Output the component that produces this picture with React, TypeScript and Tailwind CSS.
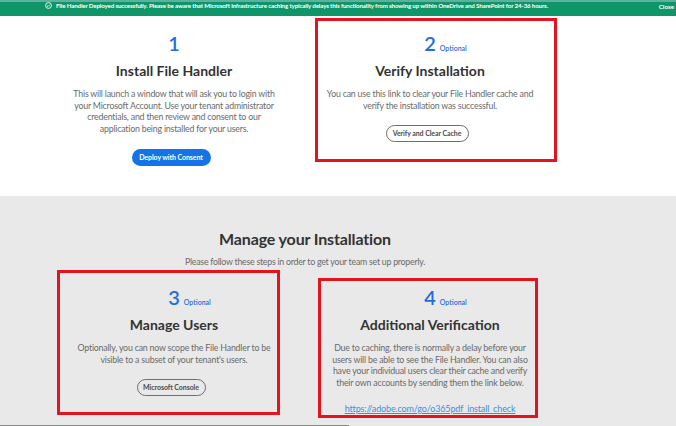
const font = "font-['Lato','Open_Sans',sans-serif]";

function StepNumber({ n, optional }: { n: number; optional?: boolean }) {
  return (
    <div className="flex h-[24px] justify-center">
      <span className="relative text-[20px] leading-[24px] font-semibold text-[#1f6fd8]">
        {n}
        {optional && (
          <span className="absolute left-[calc(100%+4px)] bottom-[2px] text-[7px] leading-[10px] font-semibold whitespace-nowrap">
            Optional
          </span>
        )}
      </span>
    </div>
  );
}

function Step({
  n,
  optional,
  title,
  lines,
  children,
}: {
  n: number;
  optional?: boolean;
  title: string;
  lines: string[];
  children?: React.ReactNode;
}) {
  return (
    <div className="flex w-[256px] flex-col items-center">
      <StepNumber n={n} optional={optional} />
      <h3 className="mt-[7px] text-[14px] leading-[18px] font-bold text-[#333]">{title}</h3>
      <div className="mt-[8px] text-center text-[8.8px] leading-[11.7px] tracking-[-0.2px] whitespace-nowrap text-[#6a6a6a]">
        {lines.map((l) => (
          <p key={l}>{l}</p>
        ))}
      </div>
      {children}
    </div>
  );
}

function PillButton({ label, primary, width }: { label: string; primary?: boolean; width: string }) {
  return (
    <button
      className={`mt-[14px] -ml-[6px] h-[17px] rounded-full text-[7px] leading-none font-bold tracking-[-0.08px] ${width} ${
        primary ? "bg-[#1473e6] text-white" : "border border-[#6e6e6e] text-[#4b4b4b]"
      }`}
    >
      {label}
    </button>
  );
}

function RedBox({ className }: { className: string }) {
  return <div className={`pointer-events-none absolute border-[3px] border-[#e4141f] ${className}`} />;
}

export default function App() {
  return (
    <div className={`relative h-[426px] w-[676px] overflow-hidden bg-white ${font}`}>
      <div className="flex h-[16px] items-start border-t-2 border-[#5fb0a0] bg-[#0f9668] text-white">
        <svg viewBox="0 0 24 24" className="mt-[0px] ml-[45px] h-[7px] w-[7px]" fill="none" stroke="currentColor" strokeWidth={3}>
          <circle cx="12" cy="12" r="10" />
          <path d="M7 12l3.5 3.5L17 9" />
        </svg>
        <span className="ml-[4px] text-[6.2px] leading-[7px] font-bold tracking-[-0.15px] whitespace-nowrap">
          File Handler Deployed successfully. Please be aware that Microsoft infrastructure caching typically delays this functionality from showing up within OneDrive and SharePoint for 24-36 hours.
        </span>
        <span className="mt-[1px] mr-[2px] ml-auto text-[6.2px] leading-[7px] font-bold">Close</span>
      </div>

      <section className="flex h-[180px] pt-[15px] pl-[46px]">
        <Step
          n={1}
          title="Install File Handler"
          lines={[
            "This will launch a window that will ask you to login with",
            "your Microsoft Account. Use your tenant administrator",
            "credentials, and then review and consent to our",
            "application being installed for your users.",
          ]}
        >
          <PillButton label="Deploy with Consent" primary width="w-[79px]" />
        </Step>
        <Step
          n={2}
          optional
          title="Verify Installation"
          lines={["You can use this link to clear your File Handler cache and", "verify the installation was successful."]}
        >
          <PillButton label="Verify and Clear Cache" width="w-[83px]" />
        </Step>
      </section>

      <section className="h-[230px] bg-[#e9e9e9]">
        <div className="pr-[66px] text-center">
          <h2 className="pt-[32px] text-[16px] leading-[22px] font-bold tracking-[-0.15px] text-[#333]">Manage your Installation</h2>
          <p className="mt-[6px] text-[8.8px] leading-[12px] tracking-[-0.25px] text-[#6a6a6a]">
            Please follow these steps in order to get your team set up properly.
          </p>
        </div>
        <div className="mt-[17px] flex pl-[46px]">
          <Step
            n={3}
            optional
            title="Manage Users"
            lines={["Optionally, you can now scope the File Handler to be", "visible to a subset of your tenant's users."]}
          >
            <PillButton label="Microsoft Console" width="w-[69px]" />
          </Step>
          <Step
            n={4}
            optional
            title="Additional Verification"
            lines={[
              "Due to caching, there is normally a delay before your",
              "users will be able to see the File Handler. You can also",
              "have your individual users clear their cache and verify",
              "their own accounts by sending them the link below.",
            ]}
          >
            <a className="mt-[14px] text-[9px] leading-[12px] tracking-[-0.15px] text-[#3f8de0] underline">https://adobe.com/go/o365pdf_install_check</a>
          </Step>
        </div>
      </section>

      <div className="absolute bottom-0 left-0 h-[1px] w-[349px] bg-[#8a8a8a]" />

      {/* annotation rectangles drawn over the page */}
      <RedBox className="left-[315px] top-[18px] h-[144px] w-[242px]" />
      <RedBox className="left-[57px] top-[270px] h-[145px] w-[223px]" />
      <RedBox className="left-[318px] top-[278px] h-[140px] w-[220px]" />
    </div>
  );
}
